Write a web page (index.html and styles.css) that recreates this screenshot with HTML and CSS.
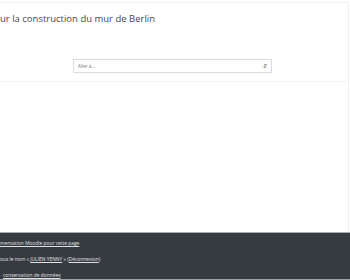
FILE: index.html
```html
<!DOCTYPE html>
<html lang="fr">
<head>
    <meta charset="UTF-8">
    <title>Moodle</title>
    <link rel="stylesheet" href="styles.css">
</head>
<body>
    <div class="page">
        <div class="card">
            <h2 class="title">ur la construction du mur de Berlin</h2>
            <div class="jump">
                <div class="jump-select">
                    <span>Aller à...</span>
                    <span class="arrow">&#8693;</span>
                </div>
            </div>
            <div class="sep"></div>
        </div>
    </div>
    <footer class="footer">
        <div class="foot-line"><a href="#">mentation Moodle pour cette page</a></div>
        <div class="foot-line">ous le nom « <a href="#">JULIEN YENNY</a> » (<a href="#">Déconnexion</a>)</div>
        <div class="foot-line last"><a href="#">conservation de données</a></div>
    </footer>
</body>
</html>
```

FILE: styles.css
```css
html, body {
    margin: 0;
    padding: 0;
    background-color: #ffffff;
    font-family: "Open Sans", "Noto Sans", sans-serif;
}
.page {
    height: 232px;
    padding-top: 2px;
    box-sizing: border-box;
}
.card {
    border-top: 1px solid #f0f0f0;
    border-right: 1px solid #f0f0f0;
    margin-right: 1px;
    height: 229px;
}
.title {
    margin: 0;
    padding-top: 9px;
    font-size: 9.5px;
    font-weight: 400;
    line-height: 13px;
    color: #45484b;
}
.jump {
    display: flex;
    padding-top: 34px;
    padding-left: 73px;
}
.jump-select {
    width: 199px;
    height: 14px;
    box-sizing: border-box;
    border: 1px solid #dcdcdc;
    display: flex;
    justify-content: space-between;
    align-items: center;
    padding: 0 4px;
    font-size: 4.6px;
    color: #777;
}
.arrow {
    font-size: 5px;
    color: #666;
}
.sep {
    margin-top: 8px;
    border-bottom: 1px solid #f3f3f3;
}
.footer {
    height: 48px;
    box-sizing: border-box;
    border-top: 1px solid #a9abad;
    border-bottom: 1px solid #9c9fa3;
    background-color: #363b42;
    padding-top: 7px;
    font-size: 4.9px;
    color: #e0e0e0;
}
.foot-line {
    height: 16px;
    line-height: 6px;
}
.foot-line.last {
    padding-left: 3px;
}
.footer a {
    color: #e0e0e0;
    text-decoration: underline;
}
```
